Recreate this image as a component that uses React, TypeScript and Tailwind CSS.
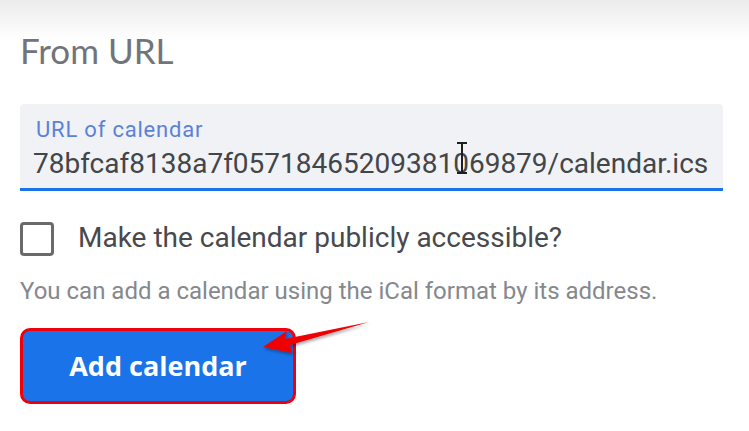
import React from "react";

export default function App() {
  return (
    <div className="relative w-[749px] h-[431px] overflow-hidden bg-white" style={{ fontFamily: "Roboto, sans-serif" }}>
      <div className="absolute inset-x-0 top-0 h-[40px] bg-gradient-to-b from-[#ebebeb] to-white" />
      <div className="relative flex flex-col items-start pl-[20px] pt-[33px]">
        <h1 className="text-[35px] leading-[35px] text-[#717478] font-normal" style={{ fontFamily: "Lato, sans-serif" }}>
          From URL
        </h1>
        <div className="mt-[36px] w-[703px] h-[87px] bg-[#f0f2f6] rounded-t-[4px] border-b-[3px] border-[#1a73e8] pt-[15px] flex flex-col">
          <div className="pl-[16px] text-[22px] leading-[22px] tracking-[0.8px] text-[#5b82d8]">URL of calendar</div>
          <div className="mt-[9px] pl-[13px] text-[28px] leading-[28px] text-[#434549] whitespace-nowrap">
            78bfcaf8138a7f05718465209381069879/calendar.ics
          </div>
        </div>
        <div className="mt-[31px] flex items-start gap-[24px]">
          <div className="w-[34px] h-[34px] rounded-[4px] border-[3px] border-[#6a6a6c]" />
          <span className="mt-[2px] text-[28px] leading-[28px] text-[#48494d]">Make the calendar publicly accessible?</span>
        </div>
        <p className="mt-[23px] text-[24px] leading-[24px] text-[#85888d]">
          You can add a calendar using the iCal format by its address.
        </p>
        <div className="mt-[25px] w-[276px] h-[76px] rounded-[10px] border-[3px] border-[#f0000a] bg-[#1a73e8] flex items-center justify-center">
          <span className="text-[27px] font-bold text-white" style={{ fontFamily: "'Open Sans', sans-serif" }}>Add calendar</span>
        </div>
      </div>
      <svg className="absolute left-0 top-0" width="749" height="431" viewBox="0 0 749 431">
        <defs>
          <filter id="sh" x="-20%" y="-50%" width="140%" height="200%">
            <feDropShadow dx="1" dy="2" stdDeviation="1.5" floodColor="#000" floodOpacity="0.35" />
          </filter>
        </defs>
        <g stroke="#1e1e1e" strokeWidth="2" fill="none">
          <line x1="462" y1="143" x2="462" y2="173" />
          <line x1="457" y1="143" x2="467" y2="143" />
          <line x1="457" y1="173" x2="467" y2="173" />
        </g>
        <polygon
          points="263,347 287,331 285,339 369,322 290,345 292,353"
          fill="#f00000"
          filter="url(#sh)"
        />
      </svg>
    </div>
  );
}
